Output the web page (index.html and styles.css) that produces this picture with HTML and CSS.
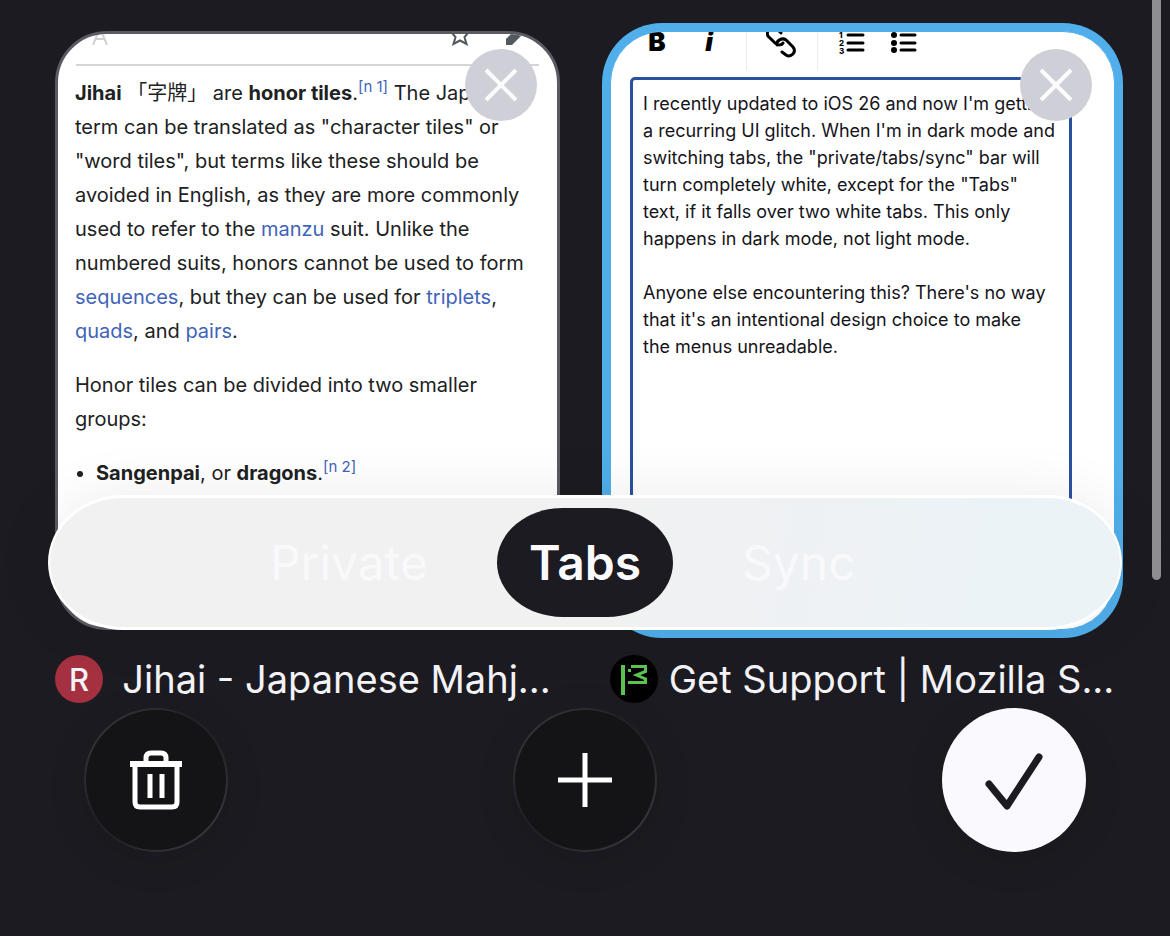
FILE: index.html
```html
<!DOCTYPE html>
<html lang="en">
<head>
    <meta charset="UTF-8">
    <meta name="viewport" content="width=device-width, initial-scale=1.0">
    <title>Tabs</title>
    <link rel="stylesheet" href="styles.css">
</head>
<body>
    <main class="tab-tray">
        <div class="tab-grid">
            <article class="tab">
                <div class="preview">
                    <div class="wiki-tools">
                        <svg class="lang-icon" width="16" height="20" viewBox="0 0 16 20" fill="none" stroke="#d0d0d0" stroke-width="2"><path d="M1 19 8 2l7 17M4 13h8"/></svg>
                        <svg class="star-icon" width="22" height="22" viewBox="0 0 22 22" fill="none" stroke="#54595d" stroke-width="2"><path d="m11 2 2.700 6h6.300l-4.500 5 2 7-6.500-3.500L4.500 20l2-7L2 8h6.300z"/></svg>
                        <svg class="pencil-icon" width="22" height="22" viewBox="0 0 22 22" fill="#54595d"><path d="M1 21v-6L15 1l6 6L7 21z"/></svg>
                    </div>
                    <div class="wiki">
                        <p><b>Jihai</b> 「字牌」 are <b>honor tiles</b>.<sup><a href="#n1">[n 1]</a></sup> The Japanese<br>
                        term can be translated as "character tiles" or<br>
                        "word tiles", but terms like these should be<br>
                        avoided in English, as they are more commonly<br>
                        used to refer to the <a href="#manzu">manzu</a> suit. Unlike the<br>
                        numbered suits, honors cannot be used to form<br>
                        <a href="#sequences">sequences</a>, but they can be used for <a href="#triplets">triplets</a>,<br>
                        <a href="#quads">quads</a>, and <a href="#pairs">pairs</a>.</p>
                        <p>Honor tiles can be divided into two smaller<br>groups:</p>
                        <ul>
                            <li><b>Sangenpai</b>, or <b>dragons</b>.<sup><a href="#n2">[n 2]</a></sup></li>
                        </ul>
                    </div>
                </div>
                <button class="close" aria-label="Close tab">
                    <svg width="36" height="36" viewBox="0 0 36 36" stroke="#fbfbfe" stroke-width="4"><path d="m3 3 30 30M33 3 3 33"/></svg>
                </button>
                <div class="tab-title">
                    <span class="favicon favicon-letter">R</span>
                    <span class="title-text">Jihai - Japanese Mahj...</span>
                </div>
            </article>

            <article class="tab selected">
                <div class="preview">
                    <div class="editor-tools">
                        <button class="tool tool-bold" aria-label="Bold">B</button>
                        <button class="tool tool-italic" aria-label="Italic">i</button>
                        <button class="tool tool-link" aria-label="Link">
                            <svg width="32" height="32" viewBox="0 0 32 32" fill="none" stroke="#000" stroke-width="3" stroke-linecap="round"><path d="m15 6-3-3C7-1-1 3 2 9l7 7c3 3 7 2 8 0M11 18c-1-4 5-8 9-5l7 7c4 5-2 11-7 8l-4-3"/></svg>
                        </button>
                        <button class="tool" aria-label="Numbered list">
                            <svg width="26" height="26" viewBox="0 0 26 26"><path d="M9 5h15M9 13h15M9 20h15" stroke="#000" stroke-width="3" stroke-linecap="round"/><g class="list-digits"><text x="0" y="8">1</text><text x="0" y="16">2</text><text x="0" y="24">3</text></g></svg>
                        </button>
                        <button class="tool" aria-label="Bulleted list">
                            <svg width="26" height="26" viewBox="0 0 26 26"><path d="M10 5h14M10 13h14M10 20h14" stroke="#000" stroke-width="3" stroke-linecap="round"/><circle cx="3" cy="5" r="3"/><circle cx="3" cy="13" r="3"/><circle cx="3" cy="20" r="3"/></svg>
                        </button>
                    </div>
                    <textarea class="question" aria-label="Question">I recently updated to iOS 26 and now I'm getting
a recurring UI glitch. When I'm in dark mode and
switching tabs, the "private/tabs/sync" bar will
turn completely white, except for the "Tabs"
text, if it falls over two white tabs. This only
happens in dark mode, not light mode.

Anyone else encountering this? There's no way
that it's an intentional design choice to make
the menus unreadable.</textarea>
                </div>
                <button class="close" aria-label="Close tab">
                    <svg width="36" height="36" viewBox="0 0 36 36" stroke="#fbfbfe" stroke-width="4"><path d="m3 3 30 30M33 3 3 33"/></svg>
                </button>
                <div class="tab-title">
                    <span class="favicon">
                        <svg width="48" height="48" viewBox="0 0 48 48" fill="none" stroke="#5cc352"><path d="M13 10v30" stroke-width="4"/><path d="M18 15.500h3M21 11.500h14.500v5l-9 3.500 9 4v3.500H18" stroke-width="3"/></svg>
                    </span>
                    <span class="title-text">Get Support | Mozilla S...</span>
                </div>
            </article>
        </div>

        <nav class="switcher">
            <button class="mode mode-private">Private</button>
            <button class="mode active">Tabs</button>
            <button class="mode mode-sync">Sync</button>
        </nav>

        <div class="scrollbar"></div>

        <footer class="actions">
            <button class="action" aria-label="Close all tabs">
                <svg width="54" height="60" viewBox="0 0 54 60" fill="none" stroke="#fff" stroke-width="5"><path d="M17 13V8q0-5 5-5h10q5 0 5 5v5"/><path d="M1 14h52" stroke-width="6"/><path d="M6 14v38q0 5 5 5h32q5 0 5-5V14M21 24v24M33 24v24"/></svg>
            </button>
            <button class="action" aria-label="New tab">
                <svg width="54" height="54" viewBox="0 0 54 54" stroke="#fff" stroke-width="5"><path d="M27 0v54M0 27h54"/></svg>
            </button>
            <button class="action done" aria-label="Done">
                <svg width="60" height="60" viewBox="0 0 60 60" fill="none" stroke="#1c1b22" stroke-width="7" stroke-linecap="round" stroke-linejoin="round"><path d="m5 34 18 22L55 7"/></svg>
            </button>
        </footer>
    </main>
</body>
</html>
```

FILE: styles.css
```css
* {
    box-sizing: border-box;
}
body {
    margin: 0;
    min-height: 100vh;
    background-color: #1c1b21;
    font-family: Inter, "Noto Sans CJK JP", sans-serif;
    color: #202122;
    overflow: hidden;
}
button {
    border: none;
    padding: 0;
    background: none;
    font-family: inherit;
    cursor: pointer;
}
svg {
    display: block;
}
.tab-tray {
    position: relative;
}
.tab-grid {
    display: grid;
    grid-template-columns: 1fr 1fr;
    gap: 50px;
    padding: 31px 55px 0;
}
.tab {
    position: relative;
    min-width: 0;
}
.preview {
    aspect-ratio: 505 / 599;
    border: 3px solid #5b5a63;
    border-radius: 52px;
    background-color: #fff;
    overflow: hidden;
}
.selected .preview {
    border: 1px solid #50aeea;
    box-shadow: 0 0 0 8px #50aeea;
}

/* wiki page */
.wiki-tools {
    display: flex;
    align-items: flex-end;
    gap: 34px;
    height: 32px;
    margin: 0 18px;
    padding: 0 12px 18px 16px;
    border-bottom: 2px solid #d5d5d5;
}
.lang-icon {
    margin-right: auto;
}
.wiki {
    padding: 10px 17px;
    font-size: 20px;
    line-height: 34px;
    white-space: nowrap;
}
.wiki p {
    margin: 0 0 20px;
}
.wiki ul {
    margin: 0;
    padding-left: 21px;
}
.wiki a {
    color: #3f63b8;
    text-decoration: none;
}
.wiki sup {
    font-size: 15px;
    line-height: 1;
}

/* support form */
.editor-tools {
    display: flex;
    align-items: flex-end;
    height: 38px;
    padding: 0 20px 14px;
}
.tool {
    display: flex;
    justify-content: center;
    align-items: flex-end;
    width: 52px;
    height: 36px;
    color: #000;
    font-size: 26px;
    font-weight: 900;
    line-height: 28px;
}
.tool-italic {
    font-style: italic;
}
.tool-link {
    width: 72px;
    height: 50px;
    margin: 0 8px -14px 11px;
    padding-bottom: 11px;
    border: solid #ececec;
    border-width: 0 1px;
}
.list-digits {
    font-size: 8px;
    font-weight: 800;
}
.question {
    display: block;
    width: calc(100% - 61px);
    height: 540px;
    margin: 7px 0 0 19px;
    padding: 10px;
    border: 3px solid #2a50a0;
    border-radius: 5px;
    outline: none;
    resize: none;
    overflow: hidden;
    background: none;
    color: #15141a;
    font-family: inherit;
    font-size: 18px;
    line-height: 27px;
    white-space: pre;
}

.close {
    position: absolute;
    top: 18px;
    right: 23px;
    display: flex;
    align-items: center;
    justify-content: center;
    width: 72px;
    height: 72px;
    border-radius: 50%;
    background-color: #cfcfd8;
}
.tab-title {
    display: flex;
    align-items: center;
    height: 48px;
    margin-top: 25px;
    color: #f3f3f7;
    font-size: 38px;
    white-space: nowrap;
}
.title-text {
    flex: 1;
    padding-left: 10px;
    text-align: center;
}
.favicon {
    display: flex;
    align-items: center;
    justify-content: center;
    width: 48px;
    height: 48px;
    border-radius: 50%;
    overflow: hidden;
    background-color: #000;
}
.favicon-letter {
    background-color: #a5303f;
    font-size: 31px;
    font-weight: 500;
}

/* floating bar over the previews */
.switcher {
    position: absolute;
    top: 495px;
    left: 48px;
    right: 48px;
    display: grid;
    grid-template-columns: 1fr auto 1fr;
    align-items: center;
    gap: 37px;
    height: 135px;
    border: 3px solid #fff;
    border-left-width: 2px;
    border-right-width: 2px;
    border-radius: 76px / 68px;
    background: linear-gradient(100deg, #f1f1f1 50%, #eff1f3 65%, #ebf3f7 90%);
    box-shadow: 0 0 60px rgba(0, 0, 0, 0.08);
}
.mode {
    height: 109px;
    padding: 0 32px;
    color: #f9f9fb;
    font-size: 48px;
}
.mode-private {
    justify-self: end;
}
.mode-sync {
    justify-self: start;
}
.active {
    border-radius: 66px / 55px;
    background-color: #1c1b21;
    color: #fbfbfe;
    font-weight: 600;
}
.scrollbar {
    position: absolute;
    top: 0;
    right: 9px;
    width: 9px;
    height: 580px;
    border-radius: 0 0 5px 5px;
    background-color: #8e8d92;
}

.actions {
    display: flex;
    justify-content: space-between;
    padding: 5px 84px 84px;
}
.action {
    display: flex;
    align-items: center;
    justify-content: center;
    width: 144px;
    height: 144px;
    border: 2px solid transparent;
    border-radius: 50%;
    background: linear-gradient(#141416, #141416) padding-box, linear-gradient(135deg, #3c3b40, #222126 40%, #222126 55%, #403f44) border-box;
    box-shadow: 0 8px 40px rgba(0, 0, 0, 0.1);
}
.done {
    border: none;
    background: #fafafe;
}
```
